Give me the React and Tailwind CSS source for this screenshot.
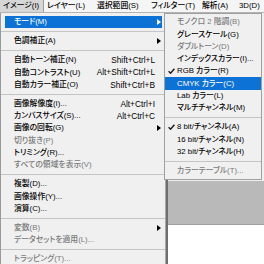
import React from "react";

const font = { fontFamily: '"Liberation Sans", "Noto Sans CJK JP", sans-serif' };

const menubar = [
  { label: "イメージ(I)", w: "w-[44px]", open: true },
  { label: "レイヤー(L)", w: "w-[50px]" },
  { label: "選択範囲(S)", w: "w-[54px]" },
  { label: "フィルター(T)", w: "w-[51px]" },
  { label: "解析(A)", w: "w-[37px]" },
  { label: "3D(D)", w: "w-[28px]" },
];

const mainItems = [
  { label: "モード(M)", arrow: true, active: true },
  { sep: true },
  { label: "色調補正(A)", arrow: true },
  { sep: true },
  { label: "自動トーン補正(N)", sc: "Shift+Ctrl+L" },
  { label: "自動コントラスト(U)", sc: "Alt+Shift+Ctrl+L" },
  { label: "自動カラー補正(O)", sc: "Shift+Ctrl+B" },
  { sep: true },
  { label: "画像解像度(I)...", sc: "Alt+Ctrl+I" },
  { label: "カンバスサイズ(S)...", sc: "Alt+Ctrl+C" },
  { label: "画像の回転(G)", arrow: true },
  { label: "切り抜き(P)", disabled: true },
  { label: "トリミング(R)..." },
  { label: "すべての領域を表示(V)", disabled: true },
  { sep: true },
  { label: "複製(D)..." },
  { label: "画像操作(Y)..." },
  { label: "演算(C)..." },
  { sep: true },
  { label: "変数(B)", arrow: true, disabled: true },
  { label: "データセットを適用(L)...", disabled: true },
  { sep: true },
  { label: "トラッピング(T)...", disabled: true },
];

const modeItems = [
  { label: "モノクロ 2 階調(B)", disabled: true },
  { label: "グレースケール(G)" },
  { label: "ダブルトーン(D)", disabled: true },
  { label: "インデックスカラー(I)..." },
  { label: "RGB カラー(R)", checked: true },
  { label: "CMYK カラー(C)", active: true },
  { label: "Lab カラー(L)" },
  { label: "マルチチャンネル(M)" },
  { sep: true },
  { label: "8 bit/チャンネル(A)", checked: true },
  { label: "16 bit/チャンネル(N)" },
  { label: "32 bit/チャンネル(H)" },
  { sep: true },
  { label: "カラーテーブル(T)...", disabled: true },
];

const Arrow = ({ white }) => (
  <svg width="4" height="6" viewBox="0 0 4 6">
    <path d="M0 0 L4 3 L0 6 Z" fill={white ? "#ffffff" : "#000000"} />
  </svg>
);

const Check = ({ white }) => (
  <svg width="7" height="6" viewBox="0 0 7 6">
    <path d="M0.6 3.2 L2.6 5.2 L6.4 0.8" fill="none" stroke={white ? "#ffffff" : "#1a1a1a"} strokeWidth="1.4" />
  </svg>
);

const Sep = () => (
  <div className="h-[6.7px] flex items-center">
    <div className="h-px w-full bg-[#c4c4c4]" />
  </div>
);

const textColor = (it) => (it.active ? "text-white" : it.disabled ? "text-[#7a7a7a]" : "text-black");

export default function App() {
  return (
    <div
      className="relative w-[264px] h-[264px] overflow-hidden bg-white text-[7.8px] font-medium leading-none [font-feature-settings:'palt']"
      style={font}
    >
      {/* menu bar */}
      <div className="flex h-[13px] bg-[#f5f5f5] border-b border-[#b4b4b4]">
        {menubar.map((m) => (
          <div
            key={m.label}
            className={`${m.w} shrink-0 h-full flex items-center pl-[3px] whitespace-nowrap text-black ${
              m.open ? "bg-[#d6d6d6] border-r border-[#9c9c9c]" : ""
            }`}
          >
            {m.label}
          </div>
        ))}
      </div>

      <div className="flex">
        {/* main image menu */}
        <div className="w-[166px] h-[251px] bg-[#f0f0f0] border-l border-[#9a9a9a] border-r border-r-[#a8a8a8] pt-[3px]">
          {mainItems.map((it, i) =>
            it.sep ? (
              <Sep key={i} />
            ) : (
              <div
                key={i}
                className={`h-[12.3px] ml-[4px] mr-[3px] flex items-center pl-[9px] ${textColor(it)} ${
                  it.active ? "bg-[#0d72d6]" : ""
                }`}
              >
                <span className="flex-1 whitespace-nowrap">{it.label}</span>
                {it.sc && <span className="whitespace-nowrap text-[8.3px]">{it.sc}</span>}
                <span className="w-[7px] flex justify-center">
                  {it.arrow && <Arrow white={it.active} />}
                </span>
              </div>
            )
          )}
        </div>

        {/* area behind the menus */}
        <div className="flex-1 flex">
          <div className="w-[2px] bg-[#6f6f6f]" />
          <div className="flex-1 flex flex-col">
            <div className="h-[168px] bg-[#f0f0f0]" />
            <div className="h-[44px] bg-[#b9b9b9] border-b border-[#a0a0a0]" />
            <div className="flex-1 bg-white" />
          </div>
        </div>
      </div>

      {/* mode submenu */}
      <div className="absolute left-[164px] top-[13px] w-[98px] bg-[#f0f0f0] border border-[#a0a0a0] py-[2px]">
        {modeItems.map((it, i) =>
          it.sep ? (
            <Sep key={i} />
          ) : (
            <div
              key={i}
              className={`relative h-[12.3px] flex items-center pl-[12px] whitespace-nowrap ${textColor(it)} ${
                it.active ? "bg-[#0d72d6]" : ""
              }`}
            >
              {it.checked && (
                <span className="absolute left-[3px] top-[3px]">
                  <Check white={it.active} />
                </span>
              )}
              {it.label}
            </div>
          )
        )}
      </div>
    </div>
  );
}
